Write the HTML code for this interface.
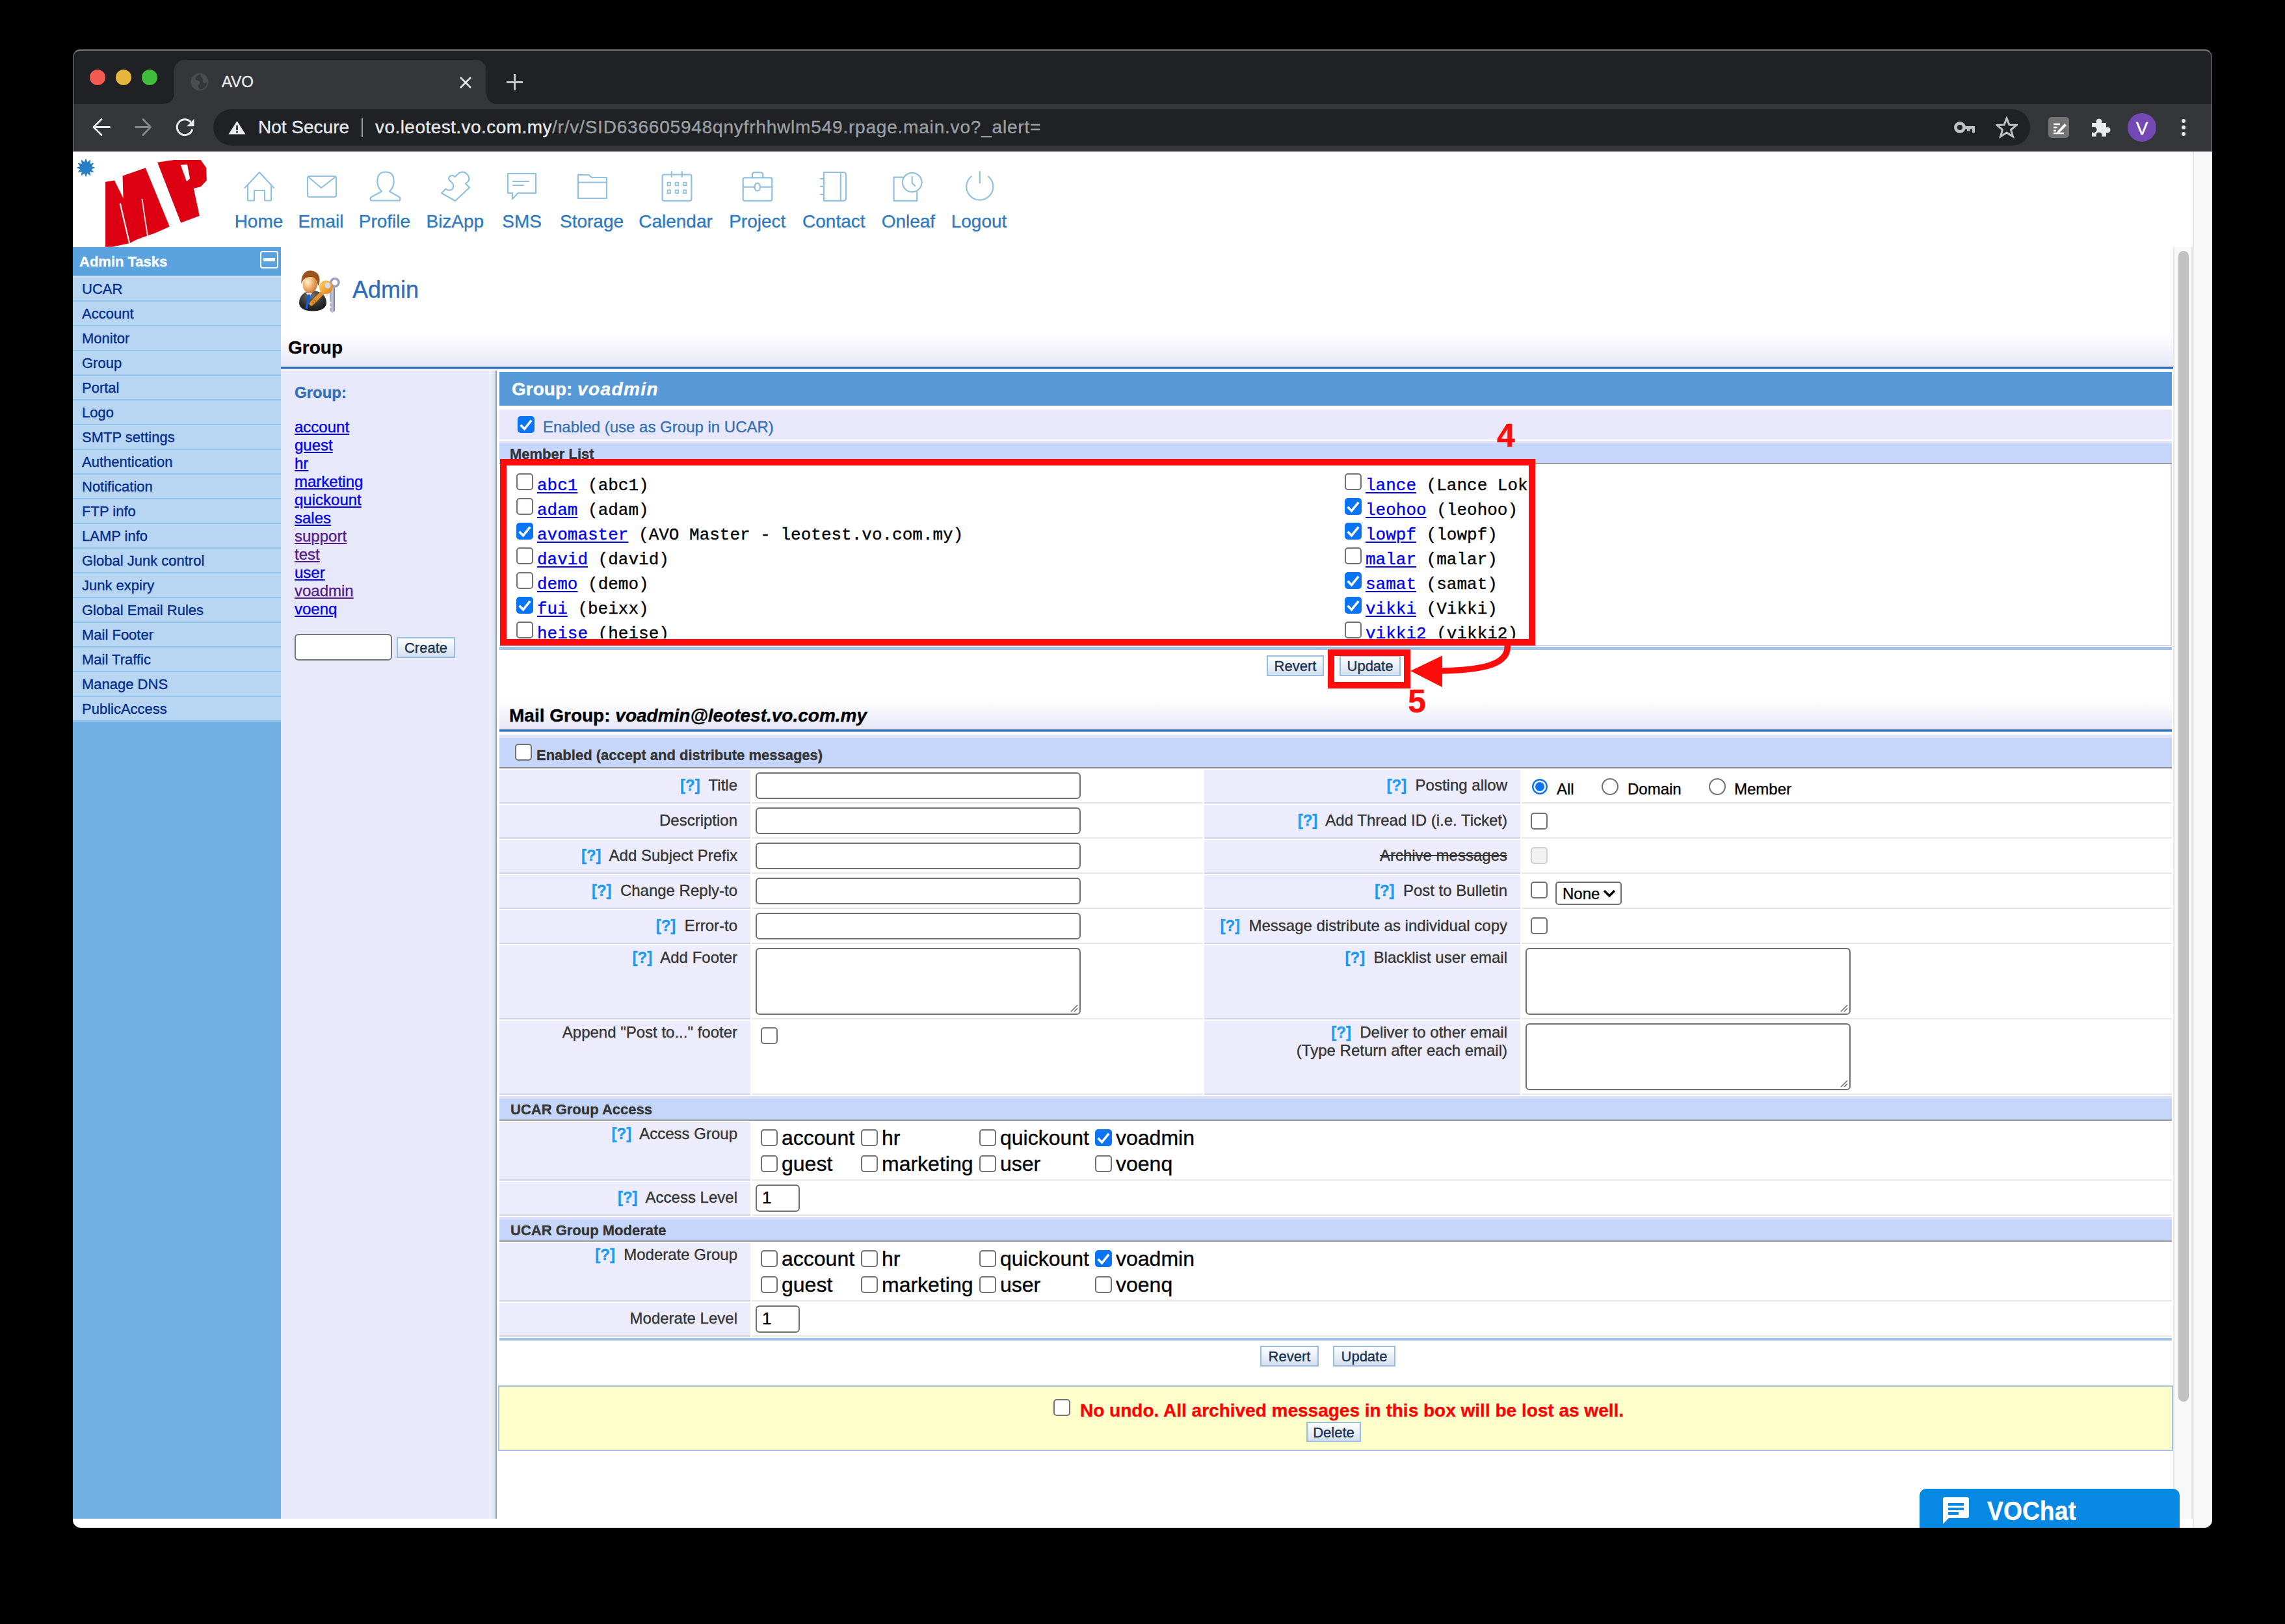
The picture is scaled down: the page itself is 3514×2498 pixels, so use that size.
<!DOCTYPE html><html><head><meta charset="utf-8"><style>
html,body{margin:0;padding:0;background:#000;width:3514px;height:2498px;overflow:hidden}
body>div,body>svg{position:absolute;box-sizing:border-box;white-space:pre}
body{font-family:"Liberation Sans",sans-serif}
body>div{-webkit-text-stroke:0.35px currentColor}
.m{font-family:"Liberation Mono",monospace}
a{color:inherit}
</style></head><body>
<div style="left:112px;top:76px;width:3290px;height:157px;background:#202124;border-radius:11px 11px 0 0;border:2px solid #4f5052;border-top-color:#76777a;border-bottom:none"></div>
<div style="left:112px;top:160px;width:3290px;height:73px;background:#35363a;border-left:2px solid #58595c;border-right:2px solid #58595c"></div>
<div style="left:112px;top:232px;width:3290px;height:1px;background:#18191b"></div>
<div style="left:268px;top:92px;width:480px;height:68px;background:#35363a;border-radius:16px 16px 0 0"></div>
<svg style="left:252px;top:144px" width="16" height="16" viewBox="0 0 16 16"><path d="M16 0 V16 H0 A16 16 0 0 0 16 0Z" fill="#35363a"/></svg>
<svg style="left:748px;top:144px" width="16" height="16" viewBox="0 0 16 16"><path d="M0 0 V16 H16 A16 16 0 0 1 0 0Z" fill="#35363a"/></svg>
<div style="left:138px;top:107px;width:24px;height:24px;background:#f45a52;border-radius:50%"></div>
<div style="left:178px;top:107px;width:24px;height:24px;background:#e7b43c;border-radius:50%"></div>
<div style="left:218px;top:107px;width:24px;height:24px;background:#3fbd3b;border-radius:50%"></div>
<svg style="left:293px;top:112px" width="28" height="28" viewBox="0 0 28 28"><circle cx="14" cy="14" r="13.5" fill="#4a4c50"/><path d="M14 2.5 C 9 4, 6 9, 8.5 11 C 11 13, 13 11, 14.5 14 C 15.5 16.5, 11 18, 12 21 C 12.5 23, 14 25, 14 25.5 A11.5 11.5 0 0 0 25.5 14 C 24 15.5, 21 17, 19.5 15 C 18 13, 20 10, 18 8 C 16.5 6.5, 15 4.5, 16 2.7Z" fill="#35363a"/></svg>
<div style="left:341px;top:114px;font-size:24px;line-height:24px;color:#e8eaed;">AVO</div>
<svg style="left:705px;top:116px" width="22" height="22" viewBox="0 0 22 22"><path d="M3 3 L19 19 M19 3 L3 19" stroke="#e8eaed" stroke-width="2.6"/></svg>
<svg style="left:778px;top:113px" width="27" height="27" viewBox="0 0 27 27"><path d="M13.5 1 V26 M1 13.5 H26" stroke="#c8cacd" stroke-width="3"/></svg>
<svg style="left:136px;top:177px" width="38" height="38" viewBox="0 0 38 38"><path d="M32.5 18.5 H8 M20 6.5 L8 18.5 L20 30.5" stroke="#e8eaed" stroke-width="3" fill="none" stroke-linecap="round" stroke-linejoin="round"/></svg>
<svg style="left:201px;top:177px" width="38" height="38" viewBox="0 0 38 38"><path d="M7.5 18.5 H30.5 M19 6.5 L30.5 18.5 L19 30.5" stroke="#85878a" stroke-width="3" fill="none" stroke-linecap="round" stroke-linejoin="round"/></svg>
<svg style="left:264px;top:176px" width="40" height="40" viewBox="0 0 40 40"><path d="M29.5 12 A12 12 0 1 0 31.8 23" stroke="#e8eaed" stroke-width="3" fill="none"/><path d="M34.5 7 V18.3 H23.2Z" fill="#e8eaed"/></svg>
<div style="left:328px;top:168px;width:2794px;height:56px;background:#202124;border-radius:28px"></div>
<svg style="left:351px;top:185px" width="27" height="22" viewBox="0 0 27 22"><path d="M13.5 1 L26.5 21.5 H0.5Z" fill="#e8eaed"/><rect x="12.2" y="8" width="2.6" height="7" fill="#202124"/><rect x="12.2" y="16.5" width="2.6" height="2.6" fill="#202124"/></svg>
<div style="left:397px;top:182px;font-size:28px;line-height:28px;color:#e8eaed;">Not Secure</div>
<div style="left:556px;top:181px;width:2px;height:30px;background:#9aa0a6"></div>
<div style="left:577px;top:182px;font-size:28px;line-height:28px;color:#e8eaed;"><span style="letter-spacing:0.45px">vo.leotest.vo.com.my</span><span style="color:#9aa0a6;letter-spacing:0.8px">/r/v/SID636605948qnyfrhhwlm549.rpage.main.vo?_alert=</span></div>
<svg style="left:3005px;top:183px" width="34" height="26" viewBox="0 0 34 26"><circle cx="9" cy="13" r="6.5" stroke="#bdc1c6" stroke-width="5" fill="none"/><path d="M15 11 H32 V21 H28 V15.5 H24 V19 H20 V15.5 H15Z" fill="#bdc1c6"/></svg>
<svg style="left:3069px;top:179px" width="34" height="34" viewBox="0 0 34 34"><path d="M17 3 L21 13 L32 13.5 L23.5 20.5 L26.5 31 L17 25 L7.5 31 L10.5 20.5 L2 13.5 L13 13Z" stroke="#bdc1c6" stroke-width="3" fill="none" stroke-linejoin="miter"/></svg>
<div style="left:3150px;top:180px;width:32px;height:32px;background:#737373;border-radius:5px"></div>
<svg style="left:3150px;top:180px" width="32" height="32" viewBox="0 0 32 32"><path d="M8 11 H18 M8 16 H14 M8 21 H12 M8 25 H24" stroke="#fff" stroke-width="2.6"/><path d="M14 22 L25 10 L28 13 L17 24 L13 25Z" fill="#fff"/></svg>
<svg style="left:3214px;top:179px" width="34" height="34" viewBox="0 0 34 34"><path d="M3 10 H10 A4.5 4.5 0 1 1 18 10 H25 V17 A4.5 4.5 0 1 1 25 25 V31 H18 A4.5 4.5 0 1 0 10 31 H3 V24 A4.5 4.5 0 1 0 3 17Z" fill="#e8eaed"/></svg>
<div style="left:3272px;top:174px;width:44px;height:44px;background:#7349b4;border-radius:50%"></div>
<div style="left:1794px;width:3000px;text-align:center;top:184px;font-size:28px;line-height:28px;color:#fff;">V</div>
<div style="left:3355px;top:183px;width:6px;height:6px;background:#e8eaed;border-radius:50%"></div>
<div style="left:3355px;top:193px;width:6px;height:6px;background:#e8eaed;border-radius:50%"></div>
<div style="left:3355px;top:203px;width:6px;height:6px;background:#e8eaed;border-radius:50%"></div>
<div style="left:112px;top:233px;width:3260px;height:2117px;background:#fff"></div>
<div style="left:3372px;top:233px;width:30px;height:2117px;background:#f8f8f8;border-left:2px solid #e8e8e8"></div>
<svg style="left:118px;top:244px" width="28" height="28" viewBox="0 0 28 28"><polygon points="14.00,-0.50 16.33,5.31 21.25,1.44 20.36,7.64 26.56,6.75 22.69,11.67 28.50,14.00 22.69,16.33 26.56,21.25 20.36,20.36 21.25,26.56 16.33,22.69 14.00,28.50 11.67,22.69 6.75,26.56 7.64,20.36 1.44,21.25 5.31,16.33 -0.50,14.00 5.31,11.67 1.44,6.75 7.64,7.64 6.75,1.44 11.67,5.31" fill="#2a7fc4"/></svg>
<svg style="left:162px;top:246px" width="156" height="134" viewBox="0 0 156 134"><path d="M0.1,33.7 L14.0,31.5 L27.6,59.0 L26.5,24.4 L61.8,12.3 L98.8,102.5 L76.0,112.8 L65.3,116.3 L48.4,122.6 L37.6,127.9 L10.9,133.7 L0.1,133.7Z" fill="#dc0012"/><path d="M80.1,3.8 L105.5,0 L146.6,0 L155.1,11.9 L155.9,31.5 L146.6,41.3 L135.9,44.0 L144.8,86.0 L116.2,96.7Z M115.8,7.8 L126.0,6.9 L130.1,28.8 L125.1,33.3Z" fill="#dc0012" fill-rule="evenodd"/><path d="M55.5,60.1 L57.3,60.1 L65.8,116.3 L64.0,116.8Z M21.6,67.2 L23.8,66.3 L38.1,127.5 L35.9,127.9Z" fill="#fbe8e8"/></svg>
<div style="left:-1102px;width:3000px;text-align:center;top:327px;font-size:28px;line-height:28px;color:#2f7abf;">Home</div>
<div style="left:-1006.6px;width:3000px;text-align:center;top:327px;font-size:28px;line-height:28px;color:#2f7abf;">Email</div>
<div style="left:-908.6px;width:3000px;text-align:center;top:327px;font-size:28px;line-height:28px;color:#2f7abf;">Profile</div>
<div style="left:-800.2px;width:3000px;text-align:center;top:327px;font-size:28px;line-height:28px;color:#2f7abf;">BizApp</div>
<div style="left:-697.3px;width:3000px;text-align:center;top:327px;font-size:28px;line-height:28px;color:#2f7abf;">SMS</div>
<div style="left:-590px;width:3000px;text-align:center;top:327px;font-size:28px;line-height:28px;color:#2f7abf;">Storage</div>
<div style="left:-461px;width:3000px;text-align:center;top:327px;font-size:28px;line-height:28px;color:#2f7abf;">Calendar</div>
<div style="left:-335.29999999999995px;width:3000px;text-align:center;top:327px;font-size:28px;line-height:28px;color:#2f7abf;">Project</div>
<div style="left:-217.70000000000005px;width:3000px;text-align:center;top:327px;font-size:28px;line-height:28px;color:#2f7abf;">Contact</div>
<div style="left:-103.09999999999991px;width:3000px;text-align:center;top:327px;font-size:28px;line-height:28px;color:#2f7abf;">Onleaf</div>
<div style="left:5.5px;width:3000px;text-align:center;top:327px;font-size:28px;line-height:28px;color:#2f7abf;">Logout</div>
<svg style="left:0;top:0" width="1600" height="330" viewBox="0 0 1600 330"><g fill="none" stroke="#92c1df" stroke-width="2.2" stroke-linejoin="round" stroke-linecap="round">
<path d="M376.5 289 L399 265 L421 289 M381 284 V308.5 H391 V293 H407 V308.5 H417 V284"/>
<rect x="473" y="271" width="44" height="32" rx="3"/><path d="M474 272 L494 289 L516 272"/>
<path d="M587 294.5 C581 289,580 281,580.5 276 C581 268,586 264.5,593 264.5 C600 264.5,605 268,605.5 276 C606 281,605 289,599 294.5 L614 303 C616 304.5,616 308.5,613 308.5 H572 C569 308.5,569 304.5,571 303 Z"/>
<path d="M679 297 L685.5 290.5 C688 293,693 293.5,695.5 291 C698 288.5,698 284,695 281 L691 277 C689 274,691 270.5,694 270 C696.5 269.5,698 271,699.5 272 L704 268 C706 265,712 263.5,716 266 C720 268.5,723.5 274,720 279 L716 282.5 L722 288.5 L700 309 Z"/>
<path d="M781 267 H824 V297 H796.5 L788 306 V297 H781 Z"/><path d="M789 279 H813 M789 285 H805"/>
<path d="M889 305 V269 H905.5 L910 273 H933 V305 Z M889 280.5 H933"/>
<rect x="1018.6" y="268.5" width="44.8" height="40.3" rx="2.5"/><path d="M1032.8 264.2 V272 M1048.8 264.2 V272"/>
<g stroke-width="1.8"><rect x="1026.6" y="280.7" width="4.6" height="4.6"/><rect x="1038.6" y="280.7" width="4.6" height="4.6"/><rect x="1050.7" y="280.7" width="4.6" height="4.6"/><rect x="1026.6" y="292.5" width="4.6" height="4.6"/><rect x="1038.6" y="292.5" width="4.6" height="4.6"/><rect x="1050.7" y="292.5" width="4.6" height="4.6"/></g>
<rect x="1142.7" y="273.4" width="44.6" height="35.4" rx="2.5"/><path d="M1156.9 273 V269 C1156.9 266.5,1158 265.2,1161 265.2 H1169 C1172 265.2,1173.3 266.5,1173.3 269 V273"/><path d="M1143 287.6 H1160.5 M1169 287.6 H1187"/><ellipse cx="1164.8" cy="287.6" rx="4.3" ry="6"/>
<path d="M1267 265 H1297 C1299.5 265,1301 266.5,1301 269 V305 C1301 307.5,1299.5 308.8,1297 308.8 H1267 Z M1292.8 265 V308.8 M1262 275 H1267 M1262 286.8 H1267 M1262 299 H1267"/>
<path d="M1388 272.7 H1374.6 V308.8 H1410.3 V295.5"/><circle cx="1402.7" cy="280.6" r="14.8"/><path d="M1402.7 272 V281.5 L1407 286"/>
<path d="M1493.5 271.5 A20.5 20.5 0 1 0 1520 271.5"/><path d="M1506.8 264 V281.5"/>
</g></svg>
<div style="left:112px;top:380px;width:320px;height:1956px;background:#72b0e4"></div>
<div style="left:112px;top:380px;width:320px;height:44px;background:#5aa3df"></div>
<div style="left:122px;top:392px;font-size:22px;line-height:22px;color:#fff;font-weight:700;">Admin Tasks</div>
<div style="left:400px;top:386px;width:28px;height:27px;border:2px solid #fff;border-radius:4px"></div>
<div style="left:405px;top:397px;width:18px;height:5px;background:#fff"></div>
<div style="left:112px;top:424px;width:320px;height:684px;background:#b8d5f1"></div>
<div style="left:112px;top:424px;width:320px;height:3px;background:#c8e0f6"></div>
<div style="left:112px;top:462px;width:320px;height:2px;background:#8ec6e9"></div>
<div style="left:126px;top:434px;font-size:22px;line-height:22px;color:#032d8d;">UCAR</div>
<div style="left:112px;top:500px;width:320px;height:2px;background:#8ec6e9"></div>
<div style="left:126px;top:472px;font-size:22px;line-height:22px;color:#032d8d;">Account</div>
<div style="left:112px;top:538px;width:320px;height:2px;background:#8ec6e9"></div>
<div style="left:126px;top:510px;font-size:22px;line-height:22px;color:#032d8d;">Monitor</div>
<div style="left:112px;top:576px;width:320px;height:2px;background:#8ec6e9"></div>
<div style="left:126px;top:548px;font-size:22px;line-height:22px;color:#032d8d;">Group</div>
<div style="left:112px;top:614px;width:320px;height:2px;background:#8ec6e9"></div>
<div style="left:126px;top:586px;font-size:22px;line-height:22px;color:#032d8d;">Portal</div>
<div style="left:112px;top:652px;width:320px;height:2px;background:#8ec6e9"></div>
<div style="left:126px;top:624px;font-size:22px;line-height:22px;color:#032d8d;">Logo</div>
<div style="left:112px;top:690px;width:320px;height:2px;background:#8ec6e9"></div>
<div style="left:126px;top:662px;font-size:22px;line-height:22px;color:#032d8d;">SMTP settings</div>
<div style="left:112px;top:728px;width:320px;height:2px;background:#8ec6e9"></div>
<div style="left:126px;top:700px;font-size:22px;line-height:22px;color:#032d8d;">Authentication</div>
<div style="left:112px;top:766px;width:320px;height:2px;background:#8ec6e9"></div>
<div style="left:126px;top:738px;font-size:22px;line-height:22px;color:#032d8d;">Notification</div>
<div style="left:112px;top:804px;width:320px;height:2px;background:#8ec6e9"></div>
<div style="left:126px;top:776px;font-size:22px;line-height:22px;color:#032d8d;">FTP info</div>
<div style="left:112px;top:842px;width:320px;height:2px;background:#8ec6e9"></div>
<div style="left:126px;top:814px;font-size:22px;line-height:22px;color:#032d8d;">LAMP info</div>
<div style="left:112px;top:880px;width:320px;height:2px;background:#8ec6e9"></div>
<div style="left:126px;top:852px;font-size:22px;line-height:22px;color:#032d8d;">Global Junk control</div>
<div style="left:112px;top:918px;width:320px;height:2px;background:#8ec6e9"></div>
<div style="left:126px;top:890px;font-size:22px;line-height:22px;color:#032d8d;">Junk expiry</div>
<div style="left:112px;top:956px;width:320px;height:2px;background:#8ec6e9"></div>
<div style="left:126px;top:928px;font-size:22px;line-height:22px;color:#032d8d;">Global Email Rules</div>
<div style="left:112px;top:994px;width:320px;height:2px;background:#8ec6e9"></div>
<div style="left:126px;top:966px;font-size:22px;line-height:22px;color:#032d8d;">Mail Footer</div>
<div style="left:112px;top:1032px;width:320px;height:2px;background:#8ec6e9"></div>
<div style="left:126px;top:1004px;font-size:22px;line-height:22px;color:#032d8d;">Mail Traffic</div>
<div style="left:112px;top:1070px;width:320px;height:2px;background:#8ec6e9"></div>
<div style="left:126px;top:1042px;font-size:22px;line-height:22px;color:#032d8d;">Manage DNS</div>
<div style="left:112px;top:1108px;width:320px;height:2px;background:#8ec6e9"></div>
<div style="left:126px;top:1080px;font-size:22px;line-height:22px;color:#032d8d;">PublicAccess</div>
<svg style="left:459px;top:414px" width="64" height="70" viewBox="0 0 64 70"><defs><radialGradient id="hd" cx="0.35" cy="0.35" r="0.75"><stop offset="0" stop-color="#fff0d8"/><stop offset="0.45" stop-color="#f4b878"/><stop offset="1" stop-color="#c8702a"/></radialGradient>
<radialGradient id="bd" cx="0.45" cy="0.25" r="0.9"><stop offset="0" stop-color="#707070"/><stop offset="0.6" stop-color="#2a2a2a"/><stop offset="1" stop-color="#111"/></radialGradient>
<linearGradient id="gk" x1="0" y1="0" x2="1" y2="1"><stop offset="0" stop-color="#ffd860"/><stop offset="1" stop-color="#e07a20"/></linearGradient>
<linearGradient id="sk" x1="0" y1="0" x2="1" y2="0"><stop offset="0" stop-color="#8a90a8"/><stop offset="0.5" stop-color="#c8ccdc"/><stop offset="1" stop-color="#7a8098"/></linearGradient></defs>
<path d="M48 26 H56 V64 L52 67.5 L48.5 64 V60 L51 58.5 L48.5 56.5 V53 L51 51.5 L48.5 49.5Z" fill="url(#sk)"/>
<circle cx="56" cy="20.5" r="6" fill="none" stroke="#9aa0b8" stroke-width="3.5"/>
<path d="M1 52 C1 41,9 33.5,22 33 C35 33.5,43 41,43 52 C43 60,34 64.5,22 64.5 C10 64.5,1 60,1 52Z" fill="url(#bd)"/>
<path d="M11.5 36.5 L21 36.5 L16.5 43.5Z" fill="#f0f0f0"/>
<path d="M14.2 39 L18.6 39 L13.8 61 L10.6 61Z" fill="#0a5ee8"/>
<ellipse cx="17.5" cy="23.5" rx="11" ry="13.5" fill="url(#hd)"/>
<path d="M4.5 23 C3.5 12,8 2.5,17.5 2.2 C26 2,32 7,32.5 15 C33 20,31.5 24,30 26 C29 20,27 15,23 12.5 C17 11,10 13,7 17 C6 19,5 21,4.5 23Z" fill="#9a5420"/>
<path d="M36 37 L20 53" stroke="#e8902c" stroke-width="6.5" stroke-linecap="round"/><path d="M24 47 L27 50 M21 50 L23.5 52.5" stroke="#c86a1a" stroke-width="2"/>
<circle cx="42.3" cy="27.8" r="10.5" fill="url(#gk)"/>
<circle cx="45" cy="25" r="4.5" fill="#d8dce8"/></svg>
<div style="left:542px;top:428px;font-size:36px;line-height:36px;color:#2b6dba;">Admin</div>
<div style="left:432px;top:514px;width:2910px;height:50px;background:linear-gradient(#fff,#e7e7f8)"></div>
<div style="left:443px;top:521px;font-size:28px;line-height:28px;color:#000;font-weight:700;">Group</div>
<div style="left:432px;top:564px;width:2910px;height:4px;background:linear-gradient(#2d6cb5 75%,#8fb3de 75%)"></div>
<div style="left:432px;top:570px;width:320px;height:1766px;background:#e8e8fb"></div>
<div style="left:752px;top:570px;width:10px;height:1766px;background:linear-gradient(90deg,#f2f2fc,#d8dfe8)"></div>
<div style="left:762px;top:570px;width:2px;height:1766px;background:#96a1b8"></div>
<div style="left:453px;top:592px;font-size:24px;line-height:24px;color:#3370b8;font-weight:700;">Group:</div>
<div style="left:453px;top:645px;font-size:24px;line-height:24px;color:#0000ee;text-decoration:underline;text-underline-offset:2px">account</div>
<div style="left:453px;top:673px;font-size:24px;line-height:24px;color:#0000ee;text-decoration:underline;text-underline-offset:2px">guest</div>
<div style="left:453px;top:701px;font-size:24px;line-height:24px;color:#0000ee;text-decoration:underline;text-underline-offset:2px">hr</div>
<div style="left:453px;top:729px;font-size:24px;line-height:24px;color:#0000ee;text-decoration:underline;text-underline-offset:2px">marketing</div>
<div style="left:453px;top:757px;font-size:24px;line-height:24px;color:#0000ee;text-decoration:underline;text-underline-offset:2px">quickount</div>
<div style="left:453px;top:785px;font-size:24px;line-height:24px;color:#0000ee;text-decoration:underline;text-underline-offset:2px">sales</div>
<div style="left:453px;top:813px;font-size:24px;line-height:24px;color:#551a8b;text-decoration:underline;text-underline-offset:2px">support</div>
<div style="left:453px;top:841px;font-size:24px;line-height:24px;color:#551a8b;text-decoration:underline;text-underline-offset:2px">test</div>
<div style="left:453px;top:869px;font-size:24px;line-height:24px;color:#0000ee;text-decoration:underline;text-underline-offset:2px">user</div>
<div style="left:453px;top:897px;font-size:24px;line-height:24px;color:#551a8b;text-decoration:underline;text-underline-offset:2px">voadmin</div>
<div style="left:453px;top:925px;font-size:24px;line-height:24px;color:#0000ee;text-decoration:underline;text-underline-offset:2px">voenq</div>
<div style="left:453px;top:975px;width:150px;height:41px;background:#fff;border:2px solid #767676;border-radius:6px"></div>
<div style="left:610px;top:980px;width:90px;height:32px;background:linear-gradient(#fdfeff,#e9eff7 50%,#d5e0ee);border:2px solid #99bde0"></div>
<div style="left:-845.0px;width:3000px;text-align:center;top:986.0px;font-size:22px;line-height:22px;color:#1a3050;">Create</div>
<div style="left:768px;top:572px;width:2572px;height:52px;background:#5699d6"></div>
<div style="left:787px;top:585px;font-size:28px;line-height:28px;color:#fff;font-weight:700;">Group: <i style="letter-spacing:1.4px">voadmin</i></div>
<div style="left:768px;top:630px;width:2572px;height:46px;background:#e8e8fa"></div>
<svg style="left:796px;top:640px" width="26" height="26" viewBox="0 0 26 26"><rect x="0" y="0" width="26" height="26" rx="5" fill="#0a75f4"/><path d="M4.6 13.8 L10.5 19.8 L21.2 6.6" stroke="#fff" stroke-width="3.6" fill="none" stroke-linecap="butt" stroke-linejoin="miter"/></svg>
<div style="left:835px;top:645px;font-size:24px;line-height:24px;color:#3370b8;">Enabled (use as Group in UCAR)</div>
<div style="left:768px;top:678px;width:2572px;height:36px;background:linear-gradient(#e2e2f8 0,#e2e2f8 4px,#c6d6fa 4px);border-bottom:2px solid #9a9a9a"></div>
<div style="left:784px;top:688px;font-size:22px;line-height:22px;color:#333;font-weight:700;">Member List</div>
<div style="left:768px;top:714px;width:2572px;height:280px;background:#fff;border-right:2px solid #d4d4e4;border-bottom:2px solid #d4d4e4"></div>
<div style="left:768px;top:716px;width:2572px;height:266px;overflow:hidden">
<div style="position:absolute;left:26px;top:12px;width:26px;height:26px;box-sizing:border-box;background:#fff;border:2px solid #737373;border-radius:5px"></div>
<div class="m" style="position:absolute;white-space:pre;left:58px;top:18px;font-size:26px;line-height:26px;color:#000"><span style="color:#0000ee;text-decoration:underline;text-underline-offset:3px">abc1</span> (abc1)</div>
<div style="position:absolute;left:26px;top:50px;width:26px;height:26px;box-sizing:border-box;background:#fff;border:2px solid #737373;border-radius:5px"></div>
<div class="m" style="position:absolute;white-space:pre;left:58px;top:56px;font-size:26px;line-height:26px;color:#000"><span style="color:#0000ee;text-decoration:underline;text-underline-offset:3px">adam</span> (adam)</div>
<svg style="position:absolute;left:26px;top:88px" width="26" height="26" viewBox="0 0 26 26"><rect width="26" height="26" rx="5" fill="#0a75f4"/><path d="M4.6 13.8 L10.5 19.8 L21.2 6.6" stroke="#fff" stroke-width="3.6" fill="none" stroke-linecap="butt" stroke-linejoin="miter"/></svg>
<div class="m" style="position:absolute;white-space:pre;left:58px;top:94px;font-size:26px;line-height:26px;color:#000"><span style="color:#0000ee;text-decoration:underline;text-underline-offset:3px">avomaster</span> (AVO Master - leotest.vo.com.my)</div>
<div style="position:absolute;left:26px;top:126px;width:26px;height:26px;box-sizing:border-box;background:#fff;border:2px solid #737373;border-radius:5px"></div>
<div class="m" style="position:absolute;white-space:pre;left:58px;top:132px;font-size:26px;line-height:26px;color:#000"><span style="color:#0000ee;text-decoration:underline;text-underline-offset:3px">david</span> (david)</div>
<div style="position:absolute;left:26px;top:164px;width:26px;height:26px;box-sizing:border-box;background:#fff;border:2px solid #737373;border-radius:5px"></div>
<div class="m" style="position:absolute;white-space:pre;left:58px;top:170px;font-size:26px;line-height:26px;color:#000"><span style="color:#0000ee;text-decoration:underline;text-underline-offset:3px">demo</span> (demo)</div>
<svg style="position:absolute;left:26px;top:202px" width="26" height="26" viewBox="0 0 26 26"><rect width="26" height="26" rx="5" fill="#0a75f4"/><path d="M4.6 13.8 L10.5 19.8 L21.2 6.6" stroke="#fff" stroke-width="3.6" fill="none" stroke-linecap="butt" stroke-linejoin="miter"/></svg>
<div class="m" style="position:absolute;white-space:pre;left:58px;top:208px;font-size:26px;line-height:26px;color:#000"><span style="color:#0000ee;text-decoration:underline;text-underline-offset:3px">fui</span> (beixx)</div>
<div style="position:absolute;left:26px;top:240px;width:26px;height:26px;box-sizing:border-box;background:#fff;border:2px solid #737373;border-radius:5px"></div>
<div class="m" style="position:absolute;white-space:pre;left:58px;top:246px;font-size:26px;line-height:26px;color:#000"><span style="color:#0000ee;text-decoration:underline;text-underline-offset:3px">heise</span> (heise)</div>
<div style="position:absolute;left:1300px;top:12px;width:26px;height:26px;box-sizing:border-box;background:#fff;border:2px solid #737373;border-radius:5px"></div>
<div class="m" style="position:absolute;white-space:pre;left:1332px;top:18px;font-size:26px;line-height:26px;color:#000"><span style="color:#0000ee;text-decoration:underline;text-underline-offset:3px">lance</span> (Lance Lok</div>
<svg style="position:absolute;left:1300px;top:50px" width="26" height="26" viewBox="0 0 26 26"><rect width="26" height="26" rx="5" fill="#0a75f4"/><path d="M4.6 13.8 L10.5 19.8 L21.2 6.6" stroke="#fff" stroke-width="3.6" fill="none" stroke-linecap="butt" stroke-linejoin="miter"/></svg>
<div class="m" style="position:absolute;white-space:pre;left:1332px;top:56px;font-size:26px;line-height:26px;color:#000"><span style="color:#0000ee;text-decoration:underline;text-underline-offset:3px">leohoo</span> (leohoo)</div>
<svg style="position:absolute;left:1300px;top:88px" width="26" height="26" viewBox="0 0 26 26"><rect width="26" height="26" rx="5" fill="#0a75f4"/><path d="M4.6 13.8 L10.5 19.8 L21.2 6.6" stroke="#fff" stroke-width="3.6" fill="none" stroke-linecap="butt" stroke-linejoin="miter"/></svg>
<div class="m" style="position:absolute;white-space:pre;left:1332px;top:94px;font-size:26px;line-height:26px;color:#000"><span style="color:#0000ee;text-decoration:underline;text-underline-offset:3px">lowpf</span> (lowpf)</div>
<div style="position:absolute;left:1300px;top:126px;width:26px;height:26px;box-sizing:border-box;background:#fff;border:2px solid #737373;border-radius:5px"></div>
<div class="m" style="position:absolute;white-space:pre;left:1332px;top:132px;font-size:26px;line-height:26px;color:#000"><span style="color:#0000ee;text-decoration:underline;text-underline-offset:3px">malar</span> (malar)</div>
<svg style="position:absolute;left:1300px;top:164px" width="26" height="26" viewBox="0 0 26 26"><rect width="26" height="26" rx="5" fill="#0a75f4"/><path d="M4.6 13.8 L10.5 19.8 L21.2 6.6" stroke="#fff" stroke-width="3.6" fill="none" stroke-linecap="butt" stroke-linejoin="miter"/></svg>
<div class="m" style="position:absolute;white-space:pre;left:1332px;top:170px;font-size:26px;line-height:26px;color:#000"><span style="color:#0000ee;text-decoration:underline;text-underline-offset:3px">samat</span> (samat)</div>
<svg style="position:absolute;left:1300px;top:202px" width="26" height="26" viewBox="0 0 26 26"><rect width="26" height="26" rx="5" fill="#0a75f4"/><path d="M4.6 13.8 L10.5 19.8 L21.2 6.6" stroke="#fff" stroke-width="3.6" fill="none" stroke-linecap="butt" stroke-linejoin="miter"/></svg>
<div class="m" style="position:absolute;white-space:pre;left:1332px;top:208px;font-size:26px;line-height:26px;color:#000"><span style="color:#0000ee;text-decoration:underline;text-underline-offset:3px">vikki</span> (Vikki)</div>
<div style="position:absolute;left:1300px;top:240px;width:26px;height:26px;box-sizing:border-box;background:#fff;border:2px solid #737373;border-radius:5px"></div>
<div class="m" style="position:absolute;white-space:pre;left:1332px;top:246px;font-size:26px;line-height:26px;color:#000"><span style="color:#0000ee;text-decoration:underline;text-underline-offset:3px">vikki2</span> (vikki2)</div>
</div>
<div style="left:768px;top:995px;width:2572px;height:5px;background:#a3c3e3"></div>
<div style="left:1948px;top:1008px;width:88px;height:32px;background:linear-gradient(#fdfeff,#e9eff7 50%,#d5e0ee);border:2px solid #99bde0"></div>
<div style="left:492.0px;width:3000px;text-align:center;top:1014.0px;font-size:22px;line-height:22px;color:#1a3050;">Revert</div>
<div style="left:2060px;top:1008px;width:94px;height:32px;background:linear-gradient(#fdfeff,#e9eff7 50%,#d5e0ee);border:2px solid #99bde0"></div>
<div style="left:607.0px;width:3000px;text-align:center;top:1014.0px;font-size:22px;line-height:22px;color:#1a3050;">Update</div>
<div style="left:768px;top:1075px;width:2572px;height:47px;background:linear-gradient(#fff,#e7e7f8)"></div>
<div style="left:783px;top:1087px;font-size:28px;line-height:28px;color:#000;font-weight:700;">Mail Group: <i>voadmin@leotest.vo.com.my</i></div>
<div style="left:768px;top:1122px;width:2572px;height:4px;background:linear-gradient(#2d6cb5 75%,#8fb3de 75%)"></div>
<div style="left:768px;top:1130px;width:2572px;height:52px;background:linear-gradient(#e2e2f8 0,#e2e2f8 5px,#c6d6fa 5px);border-bottom:2px solid #8a8a8a"></div>
<div style="left:792px;top:1144px;width:26px;height:26px;background:#fff;border:2px solid #737373;border-radius:5px"></div>
<div style="left:825px;top:1151px;font-size:22px;line-height:22px;color:#333;font-weight:700;">Enabled (accept and distribute messages)</div>
<div style="left:768px;top:1184px;width:386px;height:50px;background:#ececfc"></div>
<div style="left:768px;top:1234px;width:386px;height:2px;background:#d2d2ea"></div>
<div style="left:1156px;top:1234px;width:694px;height:2px;background:#e8e8e8"></div>
<div style="left:1852px;top:1184px;width:486px;height:50px;background:#ececfc"></div>
<div style="left:1852px;top:1234px;width:486px;height:2px;background:#d2d2ea"></div>
<div style="left:2340px;top:1234px;width:1000px;height:2px;background:#e8e8e8"></div>
<div style="left:-1866px;width:3000px;text-align:right;top:1195.5px;font-size:24px;line-height:24px;color:#333;"><b style="color:#1b9bf2">[?]</b>&#160; Title</div>
<div style="left:-682px;width:3000px;text-align:right;top:1195.5px;font-size:24px;line-height:24px;color:#333;"><b style="color:#1b9bf2">[?]</b>&#160; Posting allow</div>
<div style="left:1162px;top:1188px;width:500px;height:41px;background:#fff;border:2px solid #6f6f6f;border-radius:6px"></div>
<div style="left:768px;top:1238px;width:386px;height:50px;background:#ececfc"></div>
<div style="left:768px;top:1288px;width:386px;height:2px;background:#d2d2ea"></div>
<div style="left:1156px;top:1288px;width:694px;height:2px;background:#e8e8e8"></div>
<div style="left:1852px;top:1238px;width:486px;height:50px;background:#ececfc"></div>
<div style="left:1852px;top:1288px;width:486px;height:2px;background:#d2d2ea"></div>
<div style="left:2340px;top:1288px;width:1000px;height:2px;background:#e8e8e8"></div>
<div style="left:-1866px;width:3000px;text-align:right;top:1249.5px;font-size:24px;line-height:24px;color:#333;">Description</div>
<div style="left:-682px;width:3000px;text-align:right;top:1249.5px;font-size:24px;line-height:24px;color:#333;"><b style="color:#1b9bf2">[?]</b>&#160; Add Thread ID (i.e. Ticket)</div>
<div style="left:1162px;top:1242px;width:500px;height:41px;background:#fff;border:2px solid #6f6f6f;border-radius:6px"></div>
<div style="left:768px;top:1292px;width:386px;height:50px;background:#ececfc"></div>
<div style="left:768px;top:1342px;width:386px;height:2px;background:#d2d2ea"></div>
<div style="left:1156px;top:1342px;width:694px;height:2px;background:#e8e8e8"></div>
<div style="left:1852px;top:1292px;width:486px;height:50px;background:#ececfc"></div>
<div style="left:1852px;top:1342px;width:486px;height:2px;background:#d2d2ea"></div>
<div style="left:2340px;top:1342px;width:1000px;height:2px;background:#e8e8e8"></div>
<div style="left:-1866px;width:3000px;text-align:right;top:1303.5px;font-size:24px;line-height:24px;color:#333;"><b style="color:#1b9bf2">[?]</b>&#160; Add Subject Prefix</div>
<div style="left:-682px;width:3000px;text-align:right;top:1303.5px;font-size:24px;line-height:24px;color:#333;"><s>Archive messages</s></div>
<div style="left:1162px;top:1296px;width:500px;height:41px;background:#fff;border:2px solid #6f6f6f;border-radius:6px"></div>
<div style="left:768px;top:1346px;width:386px;height:50px;background:#ececfc"></div>
<div style="left:768px;top:1396px;width:386px;height:2px;background:#d2d2ea"></div>
<div style="left:1156px;top:1396px;width:694px;height:2px;background:#e8e8e8"></div>
<div style="left:1852px;top:1346px;width:486px;height:50px;background:#ececfc"></div>
<div style="left:1852px;top:1396px;width:486px;height:2px;background:#d2d2ea"></div>
<div style="left:2340px;top:1396px;width:1000px;height:2px;background:#e8e8e8"></div>
<div style="left:-1866px;width:3000px;text-align:right;top:1357.5px;font-size:24px;line-height:24px;color:#333;"><b style="color:#1b9bf2">[?]</b>&#160; Change Reply-to</div>
<div style="left:-682px;width:3000px;text-align:right;top:1357.5px;font-size:24px;line-height:24px;color:#333;"><b style="color:#1b9bf2">[?]</b>&#160; Post to Bulletin</div>
<div style="left:1162px;top:1350px;width:500px;height:41px;background:#fff;border:2px solid #6f6f6f;border-radius:6px"></div>
<div style="left:768px;top:1400px;width:386px;height:50px;background:#ececfc"></div>
<div style="left:768px;top:1450px;width:386px;height:2px;background:#d2d2ea"></div>
<div style="left:1156px;top:1450px;width:694px;height:2px;background:#e8e8e8"></div>
<div style="left:1852px;top:1400px;width:486px;height:50px;background:#ececfc"></div>
<div style="left:1852px;top:1450px;width:486px;height:2px;background:#d2d2ea"></div>
<div style="left:2340px;top:1450px;width:1000px;height:2px;background:#e8e8e8"></div>
<div style="left:-1866px;width:3000px;text-align:right;top:1411.5px;font-size:24px;line-height:24px;color:#333;"><b style="color:#1b9bf2">[?]</b>&#160; Error-to</div>
<div style="left:-682px;width:3000px;text-align:right;top:1411.5px;font-size:24px;line-height:24px;color:#333;"><b style="color:#1b9bf2">[?]</b>&#160; Message distribute as individual copy</div>
<div style="left:1162px;top:1404px;width:500px;height:41px;background:#fff;border:2px solid #6f6f6f;border-radius:6px"></div>
<div style="left:768px;top:1454px;width:386px;height:112px;background:#ececfc"></div>
<div style="left:768px;top:1566px;width:386px;height:2px;background:#d2d2ea"></div>
<div style="left:1156px;top:1566px;width:694px;height:2px;background:#e8e8e8"></div>
<div style="left:1852px;top:1454px;width:486px;height:112px;background:#ececfc"></div>
<div style="left:1852px;top:1566px;width:486px;height:2px;background:#d2d2ea"></div>
<div style="left:2340px;top:1566px;width:1000px;height:2px;background:#e8e8e8"></div>
<div style="left:-1866px;width:3000px;text-align:right;top:1461px;font-size:24px;line-height:24px;color:#333;"><b style="color:#1b9bf2">[?]</b>&#160; Add Footer</div>
<div style="left:-682px;width:3000px;text-align:right;top:1461px;font-size:24px;line-height:24px;color:#333;"><b style="color:#1b9bf2">[?]</b>&#160; Blacklist user email</div>
<div style="left:1162px;top:1458px;width:500px;height:103px;background:#fff;border:2px solid #6f6f6f;border-radius:6px"></div>
<svg style="left:1644px;top:1543px" width="14" height="14" viewBox="0 0 14 14"><path d="M13 3 L3 13 M13 8 L8 13" stroke="#6f6f6f" stroke-width="1.6"/></svg>
<div style="left:2346px;top:1458px;width:500px;height:103px;background:#fff;border:2px solid #6f6f6f;border-radius:6px"></div>
<svg style="left:2828px;top:1543px" width="14" height="14" viewBox="0 0 14 14"><path d="M13 3 L3 13 M13 8 L8 13" stroke="#6f6f6f" stroke-width="1.6"/></svg>
<div style="left:768px;top:1570px;width:386px;height:112px;background:#ececfc"></div>
<div style="left:768px;top:1682px;width:386px;height:2px;background:#d2d2ea"></div>
<div style="left:1156px;top:1682px;width:694px;height:2px;background:#e8e8e8"></div>
<div style="left:1852px;top:1570px;width:486px;height:112px;background:#ececfc"></div>
<div style="left:1852px;top:1682px;width:486px;height:2px;background:#d2d2ea"></div>
<div style="left:2340px;top:1682px;width:1000px;height:2px;background:#e8e8e8"></div>
<div style="left:-1866px;width:3000px;text-align:right;top:1576px;font-size:24px;line-height:24px;color:#333;">Append "Post to..." footer</div>
<div style="left:-682px;width:3000px;text-align:right;top:1576px;font-size:24px;line-height:24px;color:#333;"><b style="color:#1b9bf2">[?]</b>&#160; Deliver to other email</div>
<div style="left:-682px;width:3000px;text-align:right;top:1604px;font-size:24px;line-height:24px;color:#333;">(Type Return after each email)</div>
<div style="left:1170px;top:1580px;width:26px;height:26px;background:#fff;border:2px solid #737373;border-radius:5px"></div>
<div style="left:2346px;top:1574px;width:500px;height:103px;background:#fff;border:2px solid #6f6f6f;border-radius:6px"></div>
<svg style="left:2828px;top:1659px" width="14" height="14" viewBox="0 0 14 14"><path d="M13 3 L3 13 M13 8 L8 13" stroke="#6f6f6f" stroke-width="1.6"/></svg>
<svg style="left:2355px;top:1197px" width="26" height="26" viewBox="0 0 26 26"><circle cx="13" cy="13" r="12" fill="#0a75f4"/><circle cx="13" cy="13" r="9.6" fill="#fff"/><circle cx="13" cy="13" r="7" fill="#0a75f4"/></svg>
<div style="left:2394px;top:1202px;font-size:24px;line-height:24px;color:#000;">All</div>
<svg style="left:2463px;top:1197px" width="26" height="26" viewBox="0 0 26 26"><circle cx="13" cy="13" r="12" fill="#fff" stroke="#6f6f6f" stroke-width="2"/></svg>
<div style="left:2503px;top:1202px;font-size:24px;line-height:24px;color:#000;">Domain</div>
<svg style="left:2628px;top:1197px" width="26" height="26" viewBox="0 0 26 26"><circle cx="13" cy="13" r="12" fill="#fff" stroke="#6f6f6f" stroke-width="2"/></svg>
<div style="left:2667px;top:1202px;font-size:24px;line-height:24px;color:#000;">Member</div>
<div style="left:2354px;top:1250px;width:26px;height:26px;background:#fff;border:2px solid #737373;border-radius:5px"></div>
<div style="left:2354px;top:1303px;width:26px;height:26px;background:#f2f2f2;border:2px solid #d0d0d0;border-radius:5px"></div>
<div style="left:2354px;top:1356px;width:26px;height:26px;background:#fff;border:2px solid #737373;border-radius:5px"></div>
<div style="left:2392px;top:1356px;width:102px;height:36px;background:#fff;border:2px solid #6f6f6f;border-radius:5px"></div>
<div style="left:2403px;top:1363px;font-size:24px;line-height:24px;color:#000;">None</div>
<svg style="left:2464px;top:1366px" width="22" height="16" viewBox="0 0 22 16"><path d="M3 4 L11 12 L19 4" stroke="#000" stroke-width="3.4" fill="none"/></svg>
<div style="left:2354px;top:1411px;width:26px;height:26px;background:#fff;border:2px solid #737373;border-radius:5px"></div>
<div style="left:768px;top:1686px;width:2572px;height:4px;background:#dedef8"></div>
<div style="left:768px;top:1690px;width:2572px;height:32px;background:#c6d6fa"></div>
<div style="left:768px;top:1722px;width:2572px;height:2px;background:#999"></div>
<div style="left:785px;top:1696px;font-size:22px;line-height:22px;color:#333;font-weight:700;">UCAR Group Access</div>
<div style="left:768px;top:1726px;width:386px;height:88px;background:#ececfc"></div>
<div style="left:768px;top:1814px;width:386px;height:2px;background:#d2d2ea"></div>
<div style="left:1156px;top:1814px;width:2184px;height:2px;background:#e8e8e8"></div>
<div style="left:-1866px;width:3000px;text-align:right;top:1732px;font-size:24px;line-height:24px;color:#333;"><b style="color:#1b9bf2">[?]</b>&#160; Access Group</div>
<div style="left:1170px;top:1737px;width:26px;height:26px;background:#fff;border:2px solid #737373;border-radius:5px"></div>
<div style="left:1202px;top:1734px;font-size:32px;line-height:32px;color:#000;">account</div>
<div style="left:1324px;top:1737px;width:26px;height:26px;background:#fff;border:2px solid #737373;border-radius:5px"></div>
<div style="left:1356px;top:1734px;font-size:32px;line-height:32px;color:#000;">hr</div>
<div style="left:1506px;top:1737px;width:26px;height:26px;background:#fff;border:2px solid #737373;border-radius:5px"></div>
<div style="left:1538px;top:1734px;font-size:32px;line-height:32px;color:#000;">quickount</div>
<svg style="left:1684px;top:1737px" width="26" height="26" viewBox="0 0 26 26"><rect x="0" y="0" width="26" height="26" rx="5" fill="#0a75f4"/><path d="M4.6 13.8 L10.5 19.8 L21.2 6.6" stroke="#fff" stroke-width="3.6" fill="none" stroke-linecap="butt" stroke-linejoin="miter"/></svg>
<div style="left:1716px;top:1734px;font-size:32px;line-height:32px;color:#000;">voadmin</div>
<div style="left:1170px;top:1777px;width:26px;height:26px;background:#fff;border:2px solid #737373;border-radius:5px"></div>
<div style="left:1202px;top:1774px;font-size:32px;line-height:32px;color:#000;">guest</div>
<div style="left:1324px;top:1777px;width:26px;height:26px;background:#fff;border:2px solid #737373;border-radius:5px"></div>
<div style="left:1356px;top:1774px;font-size:32px;line-height:32px;color:#000;">marketing</div>
<div style="left:1506px;top:1777px;width:26px;height:26px;background:#fff;border:2px solid #737373;border-radius:5px"></div>
<div style="left:1538px;top:1774px;font-size:32px;line-height:32px;color:#000;">user</div>
<div style="left:1684px;top:1777px;width:26px;height:26px;background:#fff;border:2px solid #737373;border-radius:5px"></div>
<div style="left:1716px;top:1774px;font-size:32px;line-height:32px;color:#000;">voenq</div>
<div style="left:768px;top:1818px;width:386px;height:50px;background:#ececfc"></div>
<div style="left:768px;top:1868px;width:386px;height:2px;background:#d2d2ea"></div>
<div style="left:1156px;top:1868px;width:2184px;height:2px;background:#e8e8e8"></div>
<div style="left:-1866px;width:3000px;text-align:right;top:1830px;font-size:24px;line-height:24px;color:#333;"><b style="color:#1b9bf2">[?]</b>&#160; Access Level</div>
<div style="left:1162px;top:1822px;width:68px;height:42px;background:#fff;border:2px solid #6f6f6f;border-radius:6px"></div>
<div style="left:1172px;top:1829px;font-size:26px;line-height:26px;color:#000;">1</div>
<div style="left:768px;top:1872px;width:2572px;height:4px;background:#dedef8"></div>
<div style="left:768px;top:1876px;width:2572px;height:32px;background:#c6d6fa"></div>
<div style="left:768px;top:1908px;width:2572px;height:2px;background:#999"></div>
<div style="left:785px;top:1882px;font-size:22px;line-height:22px;color:#333;font-weight:700;">UCAR Group Moderate</div>
<div style="left:768px;top:1912px;width:386px;height:88px;background:#ececfc"></div>
<div style="left:768px;top:2000px;width:386px;height:2px;background:#d2d2ea"></div>
<div style="left:1156px;top:2000px;width:2184px;height:2px;background:#e8e8e8"></div>
<div style="left:-1866px;width:3000px;text-align:right;top:1918px;font-size:24px;line-height:24px;color:#333;"><b style="color:#1b9bf2">[?]</b>&#160; Moderate Group</div>
<div style="left:1170px;top:1923px;width:26px;height:26px;background:#fff;border:2px solid #737373;border-radius:5px"></div>
<div style="left:1202px;top:1920px;font-size:32px;line-height:32px;color:#000;">account</div>
<div style="left:1324px;top:1923px;width:26px;height:26px;background:#fff;border:2px solid #737373;border-radius:5px"></div>
<div style="left:1356px;top:1920px;font-size:32px;line-height:32px;color:#000;">hr</div>
<div style="left:1506px;top:1923px;width:26px;height:26px;background:#fff;border:2px solid #737373;border-radius:5px"></div>
<div style="left:1538px;top:1920px;font-size:32px;line-height:32px;color:#000;">quickount</div>
<svg style="left:1684px;top:1923px" width="26" height="26" viewBox="0 0 26 26"><rect x="0" y="0" width="26" height="26" rx="5" fill="#0a75f4"/><path d="M4.6 13.8 L10.5 19.8 L21.2 6.6" stroke="#fff" stroke-width="3.6" fill="none" stroke-linecap="butt" stroke-linejoin="miter"/></svg>
<div style="left:1716px;top:1920px;font-size:32px;line-height:32px;color:#000;">voadmin</div>
<div style="left:1170px;top:1963px;width:26px;height:26px;background:#fff;border:2px solid #737373;border-radius:5px"></div>
<div style="left:1202px;top:1960px;font-size:32px;line-height:32px;color:#000;">guest</div>
<div style="left:1324px;top:1963px;width:26px;height:26px;background:#fff;border:2px solid #737373;border-radius:5px"></div>
<div style="left:1356px;top:1960px;font-size:32px;line-height:32px;color:#000;">marketing</div>
<div style="left:1506px;top:1963px;width:26px;height:26px;background:#fff;border:2px solid #737373;border-radius:5px"></div>
<div style="left:1538px;top:1960px;font-size:32px;line-height:32px;color:#000;">user</div>
<div style="left:1684px;top:1963px;width:26px;height:26px;background:#fff;border:2px solid #737373;border-radius:5px"></div>
<div style="left:1716px;top:1960px;font-size:32px;line-height:32px;color:#000;">voenq</div>
<div style="left:768px;top:2004px;width:386px;height:50px;background:#ececfc"></div>
<div style="left:768px;top:2054px;width:386px;height:2px;background:#d2d2ea"></div>
<div style="left:1156px;top:2054px;width:2184px;height:2px;background:#e8e8e8"></div>
<div style="left:-1866px;width:3000px;text-align:right;top:2016px;font-size:24px;line-height:24px;color:#333;">Moderate Level</div>
<div style="left:1162px;top:2008px;width:68px;height:42px;background:#fff;border:2px solid #6f6f6f;border-radius:6px"></div>
<div style="left:1172px;top:2015px;font-size:26px;line-height:26px;color:#000;">1</div>
<div style="left:768px;top:2058px;width:2572px;height:4px;background:#a3c3e3"></div>
<div style="left:1938px;top:2070px;width:90px;height:32px;background:linear-gradient(#fdfeff,#e9eff7 50%,#d5e0ee);border:2px solid #99bde0"></div>
<div style="left:483.0px;width:3000px;text-align:center;top:2076.0px;font-size:22px;line-height:22px;color:#1a3050;">Revert</div>
<div style="left:2050px;top:2070px;width:96px;height:32px;background:linear-gradient(#fdfeff,#e9eff7 50%,#d5e0ee);border:2px solid #99bde0"></div>
<div style="left:598.0px;width:3000px;text-align:center;top:2076.0px;font-size:22px;line-height:22px;color:#1a3050;">Update</div>
<div style="left:766px;top:2131px;width:2576px;height:101px;background:#ffffcc;border:2px solid #a3c3e3"></div>
<div style="left:1620px;top:2152px;width:26px;height:26px;background:#fff;border:2px solid #737373;border-radius:5px"></div>
<div style="left:1661px;top:2156px;font-size:28px;line-height:28px;color:#ff0000;font-weight:700;">No undo. All archived messages in this box will be lost as well.</div>
<div style="left:2009px;top:2187px;width:84px;height:31px;background:linear-gradient(#fdfeff,#e9eff7 50%,#d5e0ee);border:2px solid #99bde0"></div>
<div style="left:551.0px;width:3000px;text-align:center;top:2192.5px;font-size:22px;line-height:22px;color:#1a3050;">Delete</div>
<div style="left:3342px;top:380px;width:30px;height:1956px;background:#f8f8f8;border-left:2px solid #e6e6e6;border-right:2px solid #e6e6e6"></div>
<div style="left:3350px;top:386px;width:16px;height:1770px;background:#c1c1c1;border-radius:8px"></div>
<div style="left:112px;top:2336px;width:3260px;height:14px;background:#fff"></div>
<div style="left:769px;top:706px;width:1592px;height:287px;border:10px solid #ff0d0d"></div>
<div style="left:816px;width:3000px;text-align:center;top:645px;font-size:50px;line-height:50px;color:#ff0d0d;font-weight:700;">4</div>
<div style="left:2042px;top:999px;width:127px;height:60px;border:10px solid #ff0d0d"></div>
<svg style="left:2160px;top:985px" width="180" height="80" viewBox="0 0 180 80"><path d="M158 7 C 162 40, 110 46, 55 47" stroke="#ff0d0d" stroke-width="9.5" fill="none"/><path d="M9 47 L58 23.5 L58 72Z" fill="#ff0d0d"/></svg>
<div style="left:679px;width:3000px;text-align:center;top:1054px;font-size:50px;line-height:50px;color:#ff0d0d;font-weight:700;">5</div>
<div style="left:2952px;top:2290px;width:400px;height:60px;background:#0788e3;border-radius:10px 10px 0 0"></div>
<svg style="left:2988px;top:2303px" width="40" height="41" viewBox="0 0 40 41"><path d="M3 0 H37 C39 0,40 1,40 3 V29 C40 31,39 32,37 32 H9 L0 41 V3 C0 1,1 0,3 0Z" fill="#fff"/><rect x="8" y="9" width="24" height="4" fill="#0788e3"/><rect x="8" y="16" width="24" height="4" fill="#0788e3"/><rect x="8" y="23" width="16" height="4" fill="#0788e3"/></svg>
<div style="left:3056px;top:2304px;font-size:41px;line-height:41px;color:#fff;font-weight:700;transform:scaleX(0.91);transform-origin:0 0">VOChat</div>
<svg style="left:112px;top:2338px" width="12" height="12" viewBox="0 0 12 12"><path d="M0 0 A12 12 0 0 0 12 12 H0Z" fill="#000"/></svg>
<svg style="left:3390px;top:2338px" width="12" height="12" viewBox="0 0 12 12"><path d="M12 0 A12 12 0 0 1 0 12 H12Z" fill="#000"/></svg>
</body></html>
